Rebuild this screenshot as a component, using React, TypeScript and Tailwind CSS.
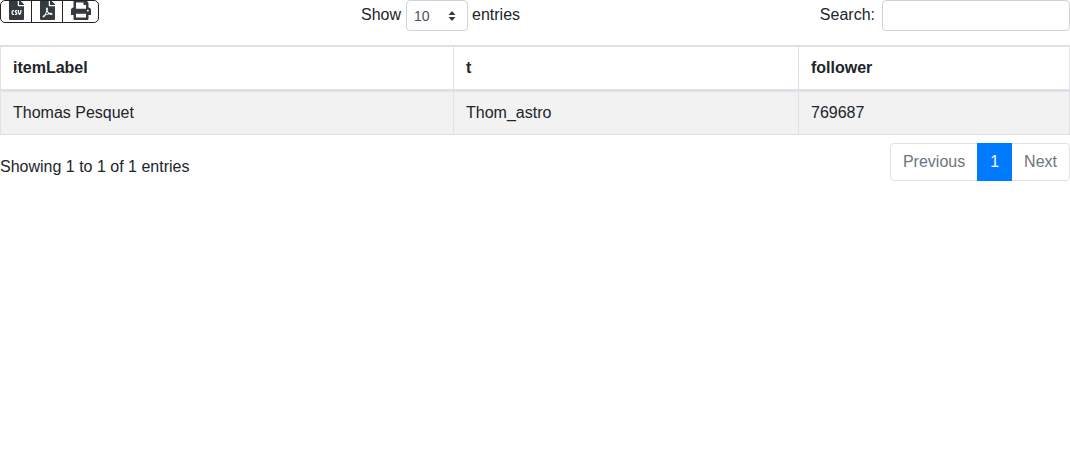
import { FaFileCsv, FaFilePdf, FaPrint } from "react-icons/fa"

export default function App() {
  return (
    <div className="bg-white text-[#212529] text-base font-['Liberation_Sans',Arial,sans-serif] leading-6">
      <div className="grid grid-cols-[361px_180px_1fr] items-start h-[45px]">
        <div className="flex">
          <div className="flex h-[23px] border border-[#212529] rounded-[5px] overflow-hidden">
            <button className="w-[31px] border-r border-[#212529] flex items-center justify-center">
              <FaFileCsv className="w-[15px] h-[20px] -mt-[3px] text-[#343a40]" />
            </button>
            <button className="w-[31px] border-r border-[#212529] flex items-center justify-center">
              <FaFilePdf className="w-[15px] h-[20px] -mt-[3px] text-[#343a40]" />
            </button>
            <button className="w-[35px] flex items-center justify-center">
              <FaPrint className="w-[20px] h-[20px] -mt-[3px] text-[#343a40]" />
            </button>
          </div>
        </div>
        <div className="flex items-start h-[31px] pt-[3px]">
          <span className="mr-[5px]">Show</span>
          <div className="relative shrink-0 w-[62px] h-[31px] -mt-[3px] border border-[#ced4da] rounded-[4px] text-sm text-[#495057] pl-[7px] flex items-center">
            10
            <svg className="absolute right-[11px] top-[10px] w-2 h-[10px]" viewBox="0 0 8 10" fill="#343a40">
              <path d="M4 0 7.5 4H.5zM4 10 .5 6h7z" />
            </svg>
          </div>
          <span className="ml-1">entries</span>
        </div>
        <div className="flex items-start justify-end gap-[7px] pt-[3px]">
          <span>Search:</span>
          <input className="w-[188px] h-[31px] -mt-[3px] border border-[#ced4da] rounded-[4px] outline-none" />
        </div>
      </div>

      <table className="w-full table-fixed border-separate border-spacing-0 border-t border-l border-b border-[#dee2e6]">
        <colgroup>
          <col className="w-[453px]" />
          <col className="w-[345px]" />
          <col />
        </colgroup>
        <thead>
          <tr>
            <th className="text-left font-bold px-3 py-[9px] border-t border-r border-b-2 border-[#dee2e6]">itemLabel</th>
            <th className="text-left font-bold px-3 py-[9px] border-t border-r border-b-2 border-[#dee2e6]">t</th>
            <th className="text-left font-bold px-3 py-[9px] border-t border-r border-b-2 border-[#dee2e6]">follower</th>
          </tr>
        </thead>
        <tbody>
          <tr className="bg-[#f2f2f2]">
            <td className="px-3 py-[9px] border-t border-r border-[#dee2e6]">Thomas Pesquet</td>
            <td className="px-3 py-[9px] border-t border-r border-[#dee2e6]">Thom_astro</td>
            <td className="px-3 py-[9px] border-t border-r border-[#dee2e6]">769687</td>
          </tr>
        </tbody>
      </table>

      <div className="flex items-start justify-between mt-2">
        <div className="pt-[12px]">Showing 1 to 1 of 1 entries</div>
        <div className="flex h-[38px] border border-[#dee2e6] rounded-[4px] text-[#6c757d]">
          <span className="px-3 flex items-center">Previous</span>
          <span className="px-[13px] -my-px flex items-center bg-[#007bff] text-white">1</span>
          <span className="px-3 flex items-center">Next</span>
        </div>
      </div>
    </div>
  )
}
